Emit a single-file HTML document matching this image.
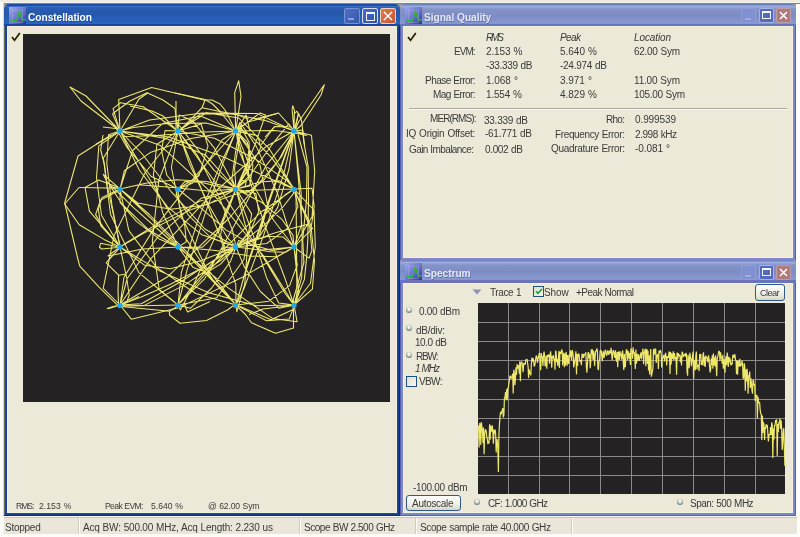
<!DOCTYPE html>
<html><head><meta charset="utf-8">
<style>
*{margin:0;padding:0;box-sizing:border-box}
html,body{width:800px;height:537px;overflow:hidden;background:#F7F6F1;font-family:"Liberation Sans",sans-serif;position:relative}
.a{position:absolute}
.t{position:absolute;white-space:nowrap;font-size:10px;color:#3A3A3A;line-height:1;will-change:transform}
.win{position:absolute}
.tb{position:absolute;left:0;right:0;top:0;height:23px;border-radius:6px 6px 0 0}
.act .tb{background:linear-gradient(#5A8AE0 0px,#2D63C8 2px,#2A5EC4 18px,#1E50B0 23px)}
.inact .tb{background:linear-gradient(#A9B6EA 0px,#8C9CDC 2px,#8898D8 18px,#7A8ACE 23px)}
.title{position:absolute;top:8px;left:24px;font-size:10.2px;font-weight:bold;line-height:1;white-space:nowrap}
.act .title{color:#fff}
.inact .title{color:#DCE2F6}
.ico{position:absolute;left:4px;top:3px;width:17px;height:17px}
.body{position:absolute;background:#ECE9D8}
.btn{position:absolute;top:4px;width:15px;height:15px;border-radius:2px}
svg{position:absolute;overflow:visible}
</style></head><body>
<div class="a" style="left:0px;top:0px;width:800px;height:537px;background:#FCFCFA;"></div>
<div class="a" style="left:0px;top:0px;width:800px;height:2px;background:#EDEAE0;"></div>
<div class="a" style="left:4px;top:2px;width:796px;height:1px;background:#F4F3EE;"></div>
<div class="a" style="left:4px;top:3px;width:796px;height:1px;background:#8A8474;"></div>
<div class="a" style="left:3px;top:3px;width:1px;height:513px;background:#D8D6D0;"></div>
<div class="a" style="left:4px;top:4px;width:792px;height:8px;background:#A09C90;"></div>
<div class="a" style="left:4px;top:10px;width:396px;height:506px;background:#1A4596;"></div>
<div class="a" style="left:4px;top:10px;width:1px;height:506px;background:#6A6C6C;"></div>
<div class="a" style="left:399px;top:10px;width:1px;height:506px;background:#0C2A6C;"></div>
<div class="a" style="left:4px;top:515px;width:396px;height:1px;background:#0C2A6C;"></div>
<div class="a" style="left:4px;top:4px;width:396px;height:22px;background:linear-gradient(#1E4C9E 0px,#1E4C9E 1.5px,#3A72C8 2.5px,#2A5EB4 3.5px,#2558AC 9px,#2862BA 18px,#2A66C0 20px,#1A48A0 20.5px,#1A48A0 22px);border-radius:5px 5px 0 0"></div>
<div class="a" style="left:7px;top:26px;width:390px;height:487px;background:#ECE9D8;border-left:1px solid #F6F1DE;border-right:1px solid #F6F1DE;border-top:1px solid #F6F1DE;border-bottom:1px solid #F6F1DE"></div>
<svg class="a" style="left:9px;top:7px" width="17" height="17" viewBox="0 0 17 17">
<defs><linearGradient id="ig97" x1="0" y1="0" x2="1" y2="1"><stop offset="0" stop-color="#A0A8E8"/><stop offset="0.5" stop-color="#7078CC"/><stop offset="1" stop-color="#2C3494"/></linearGradient></defs>
<rect width="17" height="17" fill="url(#ig97)"/>
<rect x="3.5" y="3.5" width="10" height="12" fill="none" stroke="#B8C0F0" stroke-width="0.6" opacity="0.6"/>
<polyline points="0.5,14.5 3.8,13.3 7,13.8 8.5,10.6 10.3,3.3 12.1,10.1 13.7,13.2 17,12.7" fill="none" stroke="#38B838" stroke-width="1.3"/></svg>

<div class="t" style="left:28px;top:12.5px;font-size:10.2px;font-weight:bold;color:#FFFFFF;letter-spacing:-0.05px;text-shadow:0.5px 0.5px 0.6px rgba(10,20,60,0.3)">Constellation</div>
<div class="a" style="left:344px;top:8px;width:16px;height:16px;background:linear-gradient(135deg,#5070C4,#3656AC);border:1px solid #7A92D0;border-radius:2px"></div>
<div class="a" style="left:348px;top:18px;width:6px;height:2px;background:#90A4DC"></div>
<div class="a" style="left:362px;top:8px;width:16px;height:16px;background:linear-gradient(135deg,#4A6CC8,#2E50A8);border:1px solid #D4DEF4;border-radius:2px"></div>
<div class="a" style="left:366px;top:12px;width:9px;height:9px;border:1px solid #F4F6FC;border-top-width:2px"></div>
<div class="a" style="left:380px;top:8px;width:16px;height:16px;background:linear-gradient(135deg,#DE7E4E,#C4582C);border:1px solid #F0D0BC;border-radius:2px"></div>
<svg class="a" style="left:380px;top:8px" width="16" height="16" viewBox="0 0 16 16"><path d="M4,4L12,12M12,4L4,12" stroke="#FFFFFF" stroke-width="1.5"/></svg>

<div class="a" style="left:23px;top:34px;width:367px;height:368px;background:#242222;"></div>
<svg class="a" style="left:11px;top:32px" width="10" height="10" viewBox="0 0 10 10"><path d="M1.2,5.5 L3.8,8.8 L9,1.2" fill="none" stroke="#EAD84A" stroke-width="2.2" opacity="0.6"/><path d="M1,5 L3.5,8.3 L8.8,1" fill="none" stroke="#141410" stroke-width="1.5"/></svg>
<div class="a" style="left:400px;top:10px;width:396px;height:251px;background:#7C88C8;"></div>
<div class="a" style="left:400px;top:10px;width:1px;height:251px;background:#5A60A8;"></div>
<div class="a" style="left:795px;top:10px;width:1px;height:251px;background:#5A60A8;"></div>
<div class="a" style="left:400px;top:260px;width:396px;height:1px;background:#5A60A8;"></div>
<div class="a" style="left:400px;top:4px;width:396px;height:22px;background:linear-gradient(#7080C0 0px,#7080C0 1px,#A0B0DC 2px,#98A8D8 3px,#8494C8 5px,#7C8CC4 12px,#8898D0 19px,#8494CC 20px,#6A74B8 20.5px,#6A74B8 22px);border-radius:5px 5px 0 0"></div>
<div class="a" style="left:403px;top:26px;width:390px;height:232px;background:#ECE9D8;border-left:1px solid #F6F1DE;border-right:1px solid #F6F1DE;border-top:1px solid #F6F1DE;border-bottom:1px solid #F6F1DE"></div>
<svg class="a" style="left:405px;top:7px" width="17" height="17" viewBox="0 0 17 17">
<defs><linearGradient id="ig4057" x1="0" y1="0" x2="1" y2="1"><stop offset="0" stop-color="#A0A8E8"/><stop offset="0.5" stop-color="#7078CC"/><stop offset="1" stop-color="#2C3494"/></linearGradient></defs>
<rect width="17" height="17" fill="url(#ig4057)"/>
<rect x="3.5" y="3.5" width="10" height="12" fill="none" stroke="#B8C0F0" stroke-width="0.6" opacity="0.6"/>
<polyline points="0.5,14.5 3.8,13.3 7,13.8 8.5,10.6 10.3,3.3 12.1,10.1 13.7,13.2 17,12.7" fill="none" stroke="#38B838" stroke-width="1.3"/></svg>

<div class="t" style="left:424px;top:12.5px;font-size:10.2px;font-weight:bold;color:#E4E8F8;letter-spacing:-0.05px;text-shadow:0.5px 0.5px 0.6px rgba(10,20,60,0.3)">Signal Quality</div>
<div class="a" style="left:741px;top:8px;width:15px;height:15px;background:#8090D0;border:1px solid #8E9CD8;border-radius:2px"></div>
<div class="a" style="left:745px;top:18px;width:6px;height:2px;background:#A0ACDE"></div>
<div class="a" style="left:759px;top:8px;width:15px;height:15px;background:#5668C0;border:1px solid #A4B2E6;border-radius:2px"></div>
<div class="a" style="left:762px;top:11px;width:9px;height:8px;border:1px solid #F4F6FC;border-top-width:2px"></div>
<div class="a" style="left:776px;top:8px;width:15px;height:15px;background:#B07A7C;border:1px solid #BE9CA8;border-radius:2px"></div>
<svg class="a" style="left:776px;top:8px" width="15" height="15" viewBox="0 0 15 15"><path d="M4,4L11,11M11,4L4,11" stroke="#FFFFFF" stroke-width="1.5"/></svg>

<svg class="a" style="left:407px;top:32px" width="10" height="10" viewBox="0 0 10 10"><path d="M1.2,5.5 L3.8,8.8 L9,1.2" fill="none" stroke="#EAD84A" stroke-width="2.2" opacity="0.6"/><path d="M1,5 L3.5,8.3 L8.8,1" fill="none" stroke="#141410" stroke-width="1.5"/></svg>
<div class="a" style="left:409px;top:108px;width:378px;height:1px;background:#ACA899;"></div>
<div class="a" style="left:409px;top:109px;width:378px;height:1px;background:#FAFAF6;"></div>
<div class="a" style="left:400px;top:260px;width:396px;height:7px;background:#8A90B8;"></div>
<div class="a" style="left:400px;top:266px;width:396px;height:250px;background:#7C88C8;"></div>
<div class="a" style="left:400px;top:266px;width:1px;height:250px;background:#5A60A8;"></div>
<div class="a" style="left:795px;top:266px;width:1px;height:250px;background:#5A60A8;"></div>
<div class="a" style="left:400px;top:515px;width:396px;height:1px;background:#5A60A8;"></div>
<div class="a" style="left:400px;top:260px;width:396px;height:23px;background:linear-gradient(#7080C0 0px,#7080C0 1px,#A0B0DC 2px,#98A8D8 3px,#8494C8 5px,#7C8CC4 12px,#8898D0 19px,#8494CC 20px,#6A74B8 20.5px,#6A74B8 22px);border-radius:5px 5px 0 0"></div>
<div class="a" style="left:403px;top:283px;width:390px;height:230px;background:#ECE9D8;border-left:1px solid #F6F1DE;border-right:1px solid #F6F1DE;border-top:1px solid #F6F1DE;border-bottom:1px solid #F6F1DE"></div>
<svg class="a" style="left:405px;top:263px" width="17" height="17" viewBox="0 0 17 17">
<defs><linearGradient id="ig405263" x1="0" y1="0" x2="1" y2="1"><stop offset="0" stop-color="#A0A8E8"/><stop offset="0.5" stop-color="#7078CC"/><stop offset="1" stop-color="#2C3494"/></linearGradient></defs>
<rect width="17" height="17" fill="url(#ig405263)"/>
<rect x="3.5" y="3.5" width="10" height="12" fill="none" stroke="#B8C0F0" stroke-width="0.6" opacity="0.6"/>
<polyline points="0.5,14.5 3.8,13.3 7,13.8 8.5,10.6 10.3,3.3 12.1,10.1 13.7,13.2 17,12.7" fill="none" stroke="#38B838" stroke-width="1.3"/></svg>

<div class="t" style="left:424px;top:268.5px;font-size:10.2px;font-weight:bold;color:#E4E8F8;letter-spacing:-0.05px;text-shadow:0.5px 0.5px 0.6px rgba(10,20,60,0.3)">Spectrum</div>
<div class="a" style="left:741px;top:265px;width:15px;height:15px;background:#8090D0;border:1px solid #8E9CD8;border-radius:2px"></div>
<div class="a" style="left:745px;top:275px;width:6px;height:2px;background:#A0ACDE"></div>
<div class="a" style="left:759px;top:265px;width:15px;height:15px;background:#5668C0;border:1px solid #A4B2E6;border-radius:2px"></div>
<div class="a" style="left:762px;top:268px;width:9px;height:8px;border:1px solid #F4F6FC;border-top-width:2px"></div>
<div class="a" style="left:776px;top:265px;width:15px;height:15px;background:#B07A7C;border:1px solid #BE9CA8;border-radius:2px"></div>
<svg class="a" style="left:776px;top:265px" width="15" height="15" viewBox="0 0 15 15"><path d="M4,4L11,11M11,4L4,11" stroke="#FFFFFF" stroke-width="1.5"/></svg>

<div class="a" style="left:478px;top:303px;width:307px;height:191px;background:#242222;"></div>
<svg class="a" style="left:0;top:0" width="800" height="537">
<g stroke="#8A8A88" stroke-width="1" shape-rendering="crispEdges">
<path d="M508.5,303V494M539.5,303V494M569.5,303V494M600.5,303V494M631.5,303V494M662.5,303V494M693.5,303V494M724.5,303V494M755.5,303V494"/>
<path d="M478,322.5H785M478,341.5H785M478,360.5H785M478,379.5H785M478,399.5H785M478,418.5H785M478,437.5H785M478,456.5H785M478,475.5H785"/>
</g></svg>
<svg class="a" style="left:472px;top:289px" width="10" height="6" viewBox="0 0 10 6"><path d="M0.5,0.5H9.5L5,5.5Z" fill="#8C94B8"/></svg>
<div class="a" style="left:533px;top:286px;width:11px;height:11px;border:1px solid #1C5180;background:linear-gradient(135deg,#DCDCD4,#F8F8F4)"></div>
<svg class="a" style="left:535px;top:288px" width="8" height="7" viewBox="0 0 8 7"><path d="M1,3.2 L3,5.4 L7,1" fill="none" stroke="#21A121" stroke-width="1.6"/></svg>
<div class="a" style="left:755px;top:284px;width:30px;height:17px;border:1px solid #2F5A8A;border-radius:3px;background:linear-gradient(#FFFFFF,#F2F1EA 50%,#E4E1D6 85%,#D6D2C4)"></div>

<div class="a" style="left:406px;top:307px;width:6px;height:6px;border-radius:50%;background:radial-gradient(circle at 50% 35%,#FFFFFF 0,#E8F0E0 25%,#A8B8A0 50%,#5A6898 80%,#2A3478 100%)"></div>

<div class="a" style="left:406px;top:325px;width:6px;height:6px;border-radius:50%;background:radial-gradient(circle at 50% 35%,#FFFFFF 0,#E8F0E0 25%,#A8B8A0 50%,#5A6898 80%,#2A3478 100%)"></div>

<div class="a" style="left:406px;top:352px;width:6px;height:6px;border-radius:50%;background:radial-gradient(circle at 50% 35%,#FFFFFF 0,#E8F0E0 25%,#A8B8A0 50%,#5A6898 80%,#2A3478 100%)"></div>

<div class="a" style="left:474px;top:499px;width:6px;height:6px;border-radius:50%;background:radial-gradient(circle at 50% 35%,#FFFFFF 0,#E8F0E0 25%,#A8B8A0 50%,#5A6898 80%,#2A3478 100%)"></div>

<div class="a" style="left:677px;top:499px;width:6px;height:6px;border-radius:50%;background:radial-gradient(circle at 50% 35%,#FFFFFF 0,#E8F0E0 25%,#A8B8A0 50%,#5A6898 80%,#2A3478 100%)"></div>

<div class="a" style="left:406px;top:376px;width:11px;height:11px;border:1px solid #1C5180;background:linear-gradient(135deg,#DCDCD4,#F8F8F4)"></div>
<div class="a" style="left:406px;top:495px;width:55px;height:16px;border:1px solid #2F5A8A;border-radius:3px;background:linear-gradient(#FFFFFF,#F2F1EA 50%,#E4E1D6 85%,#D6D2C4)"></div>

<div class="a" style="left:4px;top:517px;width:793px;height:1px;background:#C8C4B6;"></div>
<div class="a" style="left:4px;top:518px;width:793px;height:16px;background:#EAE7DA;"></div>
<div class="a" style="left:78px;top:518px;width:1px;height:16px;background:#CFCBBE;"></div><div class="a" style="left:79px;top:518px;width:1px;height:16px;background:#FFFFFF;"></div>
<div class="a" style="left:299px;top:518px;width:1px;height:16px;background:#CFCBBE;"></div><div class="a" style="left:300px;top:518px;width:1px;height:16px;background:#FFFFFF;"></div>
<div class="a" style="left:415px;top:518px;width:1px;height:16px;background:#CFCBBE;"></div><div class="a" style="left:416px;top:518px;width:1px;height:16px;background:#FFFFFF;"></div>
<div class="a" style="left:571px;top:518px;width:1px;height:16px;background:#CFCBBE;"></div><div class="a" style="left:572px;top:518px;width:1px;height:16px;background:#FFFFFF;"></div>
<svg class="a" style="left:0;top:0" width="800" height="537"><polyline points="294.0,131.0 257.3,113.6 202.0,113.1 149.5,120.1 120.0,131.0 123.0,136.5 153.9,135.7 197.4,132.2 236.0,131.0 257.9,135.8 260.8,147.8 250.6,166.1 236.0,189.0 224.6,213.4 220.6,234.9 225.0,247.6 236.0,247.0 249.5,233.0 258.7,211.6 255.9,193.6 236.0,189.0 200.4,200.9 159.0,222.9 127.3,242.3 120.0,247.0 143.1,233.6 190.6,209.8 246.9,190.4 294.0,189.0 314.0,210.1 315.3,246.5 310.5,283.3 294.0,305.0 278.7,303.0 266.4,277.4 253.4,235.8 236.0,189.0 214.2,147.8 192.9,121.1 179.1,115.0 178.0,131.0 189.8,164.8 208.9,205.2 226.9,237.1 236.0,247.0 232.5,230.3 217.9,194.3 197.4,155.4 178.0,131.0 165.1,130.5 161.5,150.1 166.7,175.0 178.0,189.0 192.4,183.3 207.5,162.2 222.3,139.8 236.0,131.0 247.2,141.9 252.9,165.5 249.7,186.1 236.0,189.0 214.1,170.4 191.2,141.4 176.9,122.2 178.0,131.0 194.6,172.0 218.2,231.7 235.8,284.3 236.0,305.0 215.4,283.6 180.5,230.4 144.4,170.6 120.0,131.0 114.5,125.5 127.2,147.7 151.3,176.5 178.0,189.0 199.0,175.7 208.0,146.2 201.1,124.0 178.0,131.0 144.8,173.3 114.1,235.5 103.2,288.3 120.0,305.0 167.7,276.7 229.3,218.0 279.1,159.5 294.0,131.0 266.5,146.2 209.5,196.7 151.1,258.4 120.0,305.0 131.3,319.2 179.4,307.4 242.4,277.2 294.0,247.0 312.6,228.3 306.9,224.6 275.2,232.8 236.0,247.0 200.0,261.0 170.4,268.8 144.7,265.3 120.0,247.0 101.5,215.3 96.5,177.7 98.8,145.9 120.0,131.0 168.8,136.9 225.0,157.5 271.5,179.3 294.0,189.0 286.9,180.6 255.9,159.4 214.5,138.3 178.0,131.0 156.9,144.2 153.4,175.1 162.9,213.3 178.0,247.0 193.2,267.6 206.9,272.5 220.5,264.1 236.0,247.0 253.6,226.6 271.4,207.6 285.9,194.1 294.0,189.0 293.4,193.6 283.1,206.8 263.5,225.8 236.0,247.0 203.6,267.1 170.4,284.2 141.2,296.9 120.0,305.0 108.9,308.5 107.2,308.4 112.2,306.8 120.0,305.0 126.6,302.4 129.2,295.2 126.7,277.8 120.0,247.0 112.0,205.5 106.8,163.4 108.5,134.8 120.0,131.0 141.8,153.5 171.6,192.2 204.9,229.0 236.0,247.0 258.7,237.9 267.7,206.0 260.0,164.9 236.0,131.0 200.5,115.9 162.5,123.6 132.6,150.5 120.0,189.0 128.8,230.6 156.6,267.4 195.7,293.5 236.0,305.0 268.9,301.2 289.6,285.6 297.2,265.0 294.0,247.0 283.2,237.1 267.9,236.2 251.2,241.2 236.0,247.0 225.1,249.9 220.9,249.3 224.7,247.5 236.0,247.0 252.5,249.0 270.4,251.8 285.6,252.2 294.0,247.0 293.0,235.4 281.9,219.3 262.0,202.5 236.0,189.0 206.7,181.4 176.4,179.8 146.8,182.9 120.0,189.0 102.1,197.4 98.3,209.1 100.7,225.6 120.0,247.0 160.0,271.1 208.7,292.7 256.3,305.7 294.0,305.0 312.4,289.2 314.5,260.8 310.9,225.2 294.0,189.0 271.9,158.1 252.0,136.9 239.2,127.8 236.0,131.0 241.0,144.1 248.1,162.2 248.8,178.9 236.0,189.0 208.4,190.9 172.4,187.4 139.2,184.8 120.0,189.0 120.1,202.3 136.4,221.4 159.2,238.9 178.0,247.0 186.3,241.9 184.8,225.8 179.4,205.4 178.0,189.0 185.2,181.4 200.7,182.3 219.8,186.8 236.0,189.0 245.1,186.3 246.3,181.2 242.2,180.2 236.0,189.0 228.9,208.2 218.9,231.3 202.5,247.2 178.0,247.0 148.4,229.7 122.4,204.5 110.6,186.6 120.0,189.0 149.4,214.5 188.5,253.7 221.9,289.3 236.0,305.0 225.3,294.1 194.2,261.8 154.4,221.7 120.0,189.0 103.3,174.4 106.9,181.6 134.1,208.1 178.0,247.0 228.5,288.1 272.5,318.4 297.1,321.7 294.0,305.0 263.0,255.4 213.4,194.3 160.5,145.6 120.0,131.0 103.4,158.0 110.5,214.3 138.8,272.6 178.0,305.0 216.7,297.8 244.0,259.2 251.7,213.9 236.0,189.0 201.1,198.3 159.1,235.3 127.2,278.5 120.0,305.0 141.3,303.8 181.2,281.5 219.3,256.6 236.0,247.0 222.3,259.2 185.3,284.6 144.3,305.4 120.0,305.0 124.0,277.2 154.0,228.6 196.8,174.4 236.0,131.0 260.1,112.9 265.5,115.0 255.4,143.7 236.0,189.0 213.5,240.5 193.4,285.3 180.4,310.0 178.0,305.0 187.1,269.9 204.4,215.8 223.1,162.9 236.0,131.0 239.4,129.5 235.6,151.7 232.0,178.4 236.0,189.0 250.5,174.9 271.2,145.7 288.7,123.8 294.0,131.0 283.9,173.3 263.5,235.6 244.0,288.5 236.0,305.0 244.2,276.1 264.0,216.9 284.4,158.4 294.0,131.0 287.4,148.3 268.6,200.8 247.9,262.5 236.0,305.0 236.8,311.7 244.8,283.7 248.2,236.3 236.0,189.0 205.8,155.3 166.2,138.5 132.8,133.1 120.0,131.0 133.5,127.5 166.9,123.4 206.0,123.1 236.0,131.0 249.1,147.0 247.1,166.3 239.4,182.0 236.0,189.0 242.9,187.2 259.3,182.0 279.0,180.8 294.0,189.0 298.0,206.5 288.6,227.6 266.7,243.5 236.0,247.0 201.4,234.4 167.7,207.1 139.3,170.0 120.0,131.0 113.0,108.7 120.6,102.7 143.1,106.7 178.0,131.0 219.3,187.8 258.0,248.7 284.9,293.2 294.0,305.0 285.5,279.8 266.0,228.1 246.3,171.0 236.0,131.0 240.0,122.3 256.3,146.4 277.4,193.1 294.0,247.0 298.9,293.1 289.2,319.1 266.5,320.7 236.0,305.0 205.1,265.8 181.5,216.1 171.4,167.5 178.0,131.0 200.2,114.1 232.6,113.8 266.9,121.1 294.0,131.0 306.4,135.5 300.0,133.9 275.1,130.6 236.0,131.0 190.9,138.4 150.2,152.6 124.3,170.8 120.0,189.0 137.7,203.0 170.7,209.2 207.4,204.7 236.0,189.0 249.7,165.7 249.1,142.3 241.5,128.3 236.0,131.0 239.4,151.6 253.1,184.7 273.4,220.0 294.0,247.0 309.0,258.2 311.9,250.8 309.6,226.0 294.0,189.0 269.4,148.9 238.7,118.0 206.4,112.7 178.0,131.0 158.8,180.3 152.3,241.4 159.3,290.2 178.0,305.0 204.8,278.6 235.6,223.0 266.6,164.8 294.0,131.0 311.5,135.3 314.7,171.1 312.1,216.4 294.0,247.0 261.9,250.1 226.2,230.1 195.9,203.7 178.0,189.0 176.0,194.4 188.4,215.2 210.5,237.5 236.0,247.0 259.5,236.5 277.6,207.6 289.0,169.0 294.0,131.0 294.4,110.2 292.8,105.7 292.1,109.3 294.0,131.0 298.3,177.6 302.2,230.9 301.7,277.4 294.0,305.0 279.0,308.3 260.4,291.5 244.2,266.6 236.0,247.0 238.7,240.4 251.9,244.8 272.0,250.5 294.0,247.0 310.8,230.2 314.2,206.2 312.0,188.2 294.0,189.0 260.5,212.5 222.8,250.7 192.1,286.8 178.0,305.0 183.6,299.1 203.3,276.5 224.9,253.8 236.0,247.0 230.5,261.4 211.7,288.0 190.3,308.3 178.0,305.0 181.4,272.3 198.2,219.4 219.7,165.9 236.0,131.0 241.8,124.3 239.0,141.6 234.6,168.5 236.0,189.0 246.6,193.1 263.9,180.0 281.7,156.2 294.0,131.0 298.4,114.0 296.9,111.2 294.2,113.7 294.0,131.0 297.2,160.0 301.2,193.6 301.4,224.8 294.0,247.0 276.8,256.8 250.0,256.0 215.7,250.5 178.0,247.0 142.6,249.0 116.8,254.3 108.0,256.0 120.0,247.0" fill="none" stroke="#EFE872" stroke-width="1.05" stroke-linejoin="round"/><polyline points="120,131 81,101 70,87 86,96 120,131" fill="none" stroke="#EFE872" stroke-width="1.1" stroke-linejoin="round"/><polyline points="120,131 118.7,99.5 151.7,87.5 170.5,92 205,99.5 212.5,104 220,111.5 235.7,131" fill="none" stroke="#EFE872" stroke-width="1.1" stroke-linejoin="round"/><polyline points="112.5,113.7 130,101 147,92.7 163,100 175,108.5 178,132" fill="none" stroke="#EFE872" stroke-width="1.1" stroke-linejoin="round"/><polyline points="112.5,113.7 120,131" fill="none" stroke="#EFE872" stroke-width="1.1" stroke-linejoin="round"/><polyline points="120,131 139,99 148,92.7" fill="none" stroke="#EFE872" stroke-width="1.1" stroke-linejoin="round"/><polyline points="130,106 152,111 163,116 178,132" fill="none" stroke="#EFE872" stroke-width="1.1" stroke-linejoin="round"/><polyline points="103,127 120,129" fill="none" stroke="#EFE872" stroke-width="1.1" stroke-linejoin="round"/><polyline points="120,131 95.5,144.5" fill="none" stroke="#EFE872" stroke-width="1.1" stroke-linejoin="round"/><polyline points="235.7,131 234.7,92.7 238.7,80.75 241,96.5 235.7,131" fill="none" stroke="#EFE872" stroke-width="1.1" stroke-linejoin="round"/><polyline points="175,93 205,100.2 202,107.7 181,129.5" fill="none" stroke="#EFE872" stroke-width="1.1" stroke-linejoin="round"/><polyline points="202,107.7 220,111.5 238,115 248.5,119" fill="none" stroke="#EFE872" stroke-width="1.1" stroke-linejoin="round"/><polyline points="205,100 212,100 220,104 225,110 235.7,131" fill="none" stroke="#EFE872" stroke-width="1.1" stroke-linejoin="round"/><polyline points="176,101 176,132" fill="none" stroke="#EFE872" stroke-width="1.1" stroke-linejoin="round"/><polyline points="235.7,131 246,115 250,131" fill="none" stroke="#EFE872" stroke-width="1.1" stroke-linejoin="round"/><polyline points="248.5,122 278.5,113 290.5,126.5 294,131" fill="none" stroke="#EFE872" stroke-width="1.1" stroke-linejoin="round"/><polyline points="265,137 274.7,126.5 290.5,127" fill="none" stroke="#EFE872" stroke-width="1.1" stroke-linejoin="round"/><polyline points="294.7,131 298.5,122 324.3,84.8 321,95 301.5,125 294.7,131" fill="none" stroke="#EFE872" stroke-width="1.1" stroke-linejoin="round"/><polyline points="294.7,131 298.5,113.3 301.5,120.5 304.5,145" fill="none" stroke="#EFE872" stroke-width="1.1" stroke-linejoin="round"/><polyline points="255,119 278,113.3" fill="none" stroke="#EFE872" stroke-width="1.1" stroke-linejoin="round"/><polyline points="274.5,126.5 261,145" fill="none" stroke="#EFE872" stroke-width="1.1" stroke-linejoin="round"/><polyline points="111,135 78,156 64.7,203 78.1,260 79.8,266.2 99.5,287.6 118.6,306.2" fill="none" stroke="#EFE872" stroke-width="1.1" stroke-linejoin="round"/><polyline points="79,187.5 120.2,188.2" fill="none" stroke="#EFE872" stroke-width="1.1" stroke-linejoin="round"/><polyline points="79,187.5 64.7,204 79.2,224.7 104,239.4 120.3,247.2" fill="none" stroke="#EFE872" stroke-width="1.1" stroke-linejoin="round"/><polyline points="120,188 98.5,180 85,187.5 89.4,211.2 97.2,220.2 120.3,247.2" fill="none" stroke="#EFE872" stroke-width="1.1" stroke-linejoin="round"/><polyline points="120.2,190 100.6,200 95.6,214.6 102.9,227 120.3,247.2" fill="none" stroke="#EFE872" stroke-width="1.1" stroke-linejoin="round"/><polyline points="103,135 100.7,150 104.5,165 106.7,183 120.3,247.2" fill="none" stroke="#EFE872" stroke-width="1.1" stroke-linejoin="round"/><polyline points="120.3,247.2 100.6,243.3 99.5,247.2 101.7,249 120.3,247.2" fill="none" stroke="#EFE872" stroke-width="1.1" stroke-linejoin="round"/><polyline points="120.3,247.2 108.5,260" fill="none" stroke="#EFE872" stroke-width="1.1" stroke-linejoin="round"/><polyline points="113,255 106.2,262.9 118.6,275.2 118,289.9 118.6,306.2" fill="none" stroke="#EFE872" stroke-width="1.1" stroke-linejoin="round"/><polyline points="118.6,275.2 126.5,274" fill="none" stroke="#EFE872" stroke-width="1.1" stroke-linejoin="round"/><polyline points="118.6,306.2 138.9,296.6" fill="none" stroke="#EFE872" stroke-width="1.1" stroke-linejoin="round"/><polyline points="118.5,306.3 169.5,311.2 178.5,305.7" fill="none" stroke="#EFE872" stroke-width="1.1" stroke-linejoin="round"/><polyline points="169.5,311.2 169.5,315 180,323.2 206.5,320.5 227.5,310 235,304.3" fill="none" stroke="#EFE872" stroke-width="1.1" stroke-linejoin="round"/><polyline points="118.5,306.3 177,305" fill="none" stroke="#EFE872" stroke-width="1.1" stroke-linejoin="round"/><polyline points="184.5,304.5 187.5,312 210,301.5" fill="none" stroke="#EFE872" stroke-width="1.1" stroke-linejoin="round"/><polyline points="235,304.3 245.5,314.5 251.5,322.7 275.5,333.2 293.5,328 293.5,305.2" fill="none" stroke="#EFE872" stroke-width="1.1" stroke-linejoin="round"/><polyline points="235,304.3 271,319.7 292,310" fill="none" stroke="#EFE872" stroke-width="1.1" stroke-linejoin="round"/><polyline points="249,314.5 263,309 293.5,305.2" fill="none" stroke="#EFE872" stroke-width="1.1" stroke-linejoin="round"/><polyline points="294.7,131 302.6,130 303.7,141.2 308.2,167 308.5,200 307.8,240 306.7,256.9 304.4,279.4 294,305" fill="none" stroke="#EFE872" stroke-width="1.1" stroke-linejoin="round"/><polyline points="298,134.5 307,167 306.5,200 302.7,240 303.9,262.5 293.2,300 294,305" fill="none" stroke="#EFE872" stroke-width="1.1" stroke-linejoin="round"/><polyline points="296,189 297,300" fill="none" stroke="#EFE872" stroke-width="1.1" stroke-linejoin="round"/><circle cx="120" cy="131" r="2.7" fill="#20A8F0"/><circle cx="120" cy="189.5" r="2.7" fill="#20A8F0"/><circle cx="120" cy="247" r="2.7" fill="#20A8F0"/><circle cx="120" cy="305.5" r="2.7" fill="#20A8F0"/><circle cx="178" cy="131" r="2.7" fill="#20A8F0"/><circle cx="178" cy="189.5" r="2.7" fill="#20A8F0"/><circle cx="178" cy="247" r="2.7" fill="#20A8F0"/><circle cx="178" cy="305.5" r="2.7" fill="#20A8F0"/><circle cx="235.5" cy="131" r="2.7" fill="#20A8F0"/><circle cx="235.5" cy="189.5" r="2.7" fill="#20A8F0"/><circle cx="235.5" cy="247" r="2.7" fill="#20A8F0"/><circle cx="235.5" cy="305.5" r="2.7" fill="#20A8F0"/><circle cx="294" cy="131" r="2.7" fill="#20A8F0"/><circle cx="294" cy="189.5" r="2.7" fill="#20A8F0"/><circle cx="294" cy="247" r="2.7" fill="#20A8F0"/><circle cx="294" cy="305.5" r="2.7" fill="#20A8F0"/></svg>
<svg class="a" style="left:0;top:0" width="800" height="537"><polyline points="478.0,430.8 478.6,425.6 479.1,447.4 479.7,423.0 480.2,425.0 480.8,445.1 481.3,422.2 481.9,426.5 482.4,431.5 483.0,443.0 483.5,427.5 484.1,454.2 484.6,435.5 485.2,429.9 485.7,429.8 486.3,431.7 486.8,436.6 487.4,439.5 487.9,444.2 488.5,440.8 489.0,443.5 489.6,424.2 490.1,439.7 490.7,425.6 491.2,430.4 491.8,431.5 492.3,425.3 492.9,433.4 493.4,443.6 494.0,429.5 494.5,433.6 495.1,429.7 495.6,433.0 496.2,452.5 496.7,439.0 497.3,440.8 497.8,448.1 498.4,472.0 498.9,435.2 499.5,423.8 500.0,416.7 500.6,411.7 501.1,414.3 501.7,411.8 502.2,410.5 502.8,408.1 503.3,417.5 503.9,414.6 504.4,398.0 505.0,397.6 505.5,392.0 506.1,400.3 506.6,389.4 507.2,400.1 507.7,388.2 508.3,388.0 508.8,383.9 509.4,380.5 509.9,376.2 510.5,376.1 511.0,378.1 511.6,378.0 512.1,376.6 512.7,373.5 513.2,393.5 513.8,369.7 514.3,372.1 514.9,385.1 515.4,378.9 516.0,367.2 516.5,375.0 517.1,364.1 517.6,368.5 518.2,367.6 518.7,365.0 519.3,373.6 519.8,361.3 520.4,381.3 520.9,363.4 521.5,362.0 522.0,362.2 522.6,366.4 523.1,372.2 523.7,363.8 524.2,363.3 524.8,364.1 525.3,364.5 525.9,359.3 526.4,360.0 527.0,359.5 527.5,362.2 528.1,366.9 528.6,377.9 529.2,369.4 529.7,373.8 530.3,372.3 530.8,375.4 531.4,363.4 531.9,357.5 532.5,361.7 533.0,358.1 533.6,360.3 534.1,366.0 534.7,365.8 535.2,362.7 535.8,358.1 536.3,355.6 536.9,357.0 537.4,362.8 538.0,358.7 538.5,357.6 539.1,353.9 539.6,352.8 540.2,361.6 540.7,370.3 541.3,353.0 541.8,357.0 542.4,356.5 542.9,366.0 543.5,356.0 544.0,351.6 544.6,355.3 545.1,366.1 545.7,365.5 546.2,355.9 546.8,368.7 547.3,355.1 547.9,356.2 548.4,356.4 549.0,354.2 549.5,363.6 550.1,355.1 550.6,351.4 551.2,358.0 551.7,367.6 552.3,356.1 552.8,357.7 553.4,355.2 553.9,360.0 554.5,358.5 555.0,369.7 555.6,350.6 556.1,352.4 556.7,362.2 557.2,358.7 557.8,366.0 558.3,360.2 558.9,350.9 559.4,368.1 560.0,351.7 560.5,352.8 561.1,353.8 561.6,349.6 562.2,350.6 562.7,365.4 563.3,356.2 563.8,352.7 564.4,367.2 564.9,353.7 565.5,365.6 566.0,351.9 566.6,356.1 567.1,365.6 567.7,355.0 568.2,362.7 568.8,363.7 569.3,354.6 569.9,356.9 570.4,350.3 571.0,353.8 571.5,360.2 572.1,350.0 572.6,351.5 573.2,355.1 573.7,367.4 574.3,363.9 574.8,360.5 575.4,357.1 575.9,351.3 576.5,374.6 577.0,354.0 577.6,366.0 578.1,354.3 578.7,353.7 579.2,355.9 579.8,361.6 580.3,360.6 580.9,360.8 581.4,365.2 582.0,353.9 582.5,357.6 583.1,353.9 583.6,357.9 584.2,354.5 584.7,354.4 585.3,354.6 585.8,352.2 586.4,367.5 586.9,372.8 587.5,363.4 588.0,353.0 588.6,352.7 589.1,358.5 589.7,353.7 590.2,368.2 590.8,360.3 591.3,349.2 591.9,354.1 592.4,349.4 593.0,360.0 593.5,350.8 594.1,353.7 594.6,366.1 595.2,355.8 595.7,351.0 596.3,351.0 596.8,348.5 597.4,350.6 597.9,368.6 598.5,369.9 599.0,361.5 599.6,360.0 600.1,351.1 600.7,350.3 601.2,350.8 601.8,356.3 602.3,361.1 602.9,353.4 603.4,351.2 604.0,357.9 604.5,354.9 605.1,350.6 605.6,349.9 606.2,354.1 606.7,355.7 607.3,353.4 607.8,350.3 608.4,353.2 608.9,354.9 609.5,351.2 610.0,351.2 610.6,353.4 611.1,347.8 611.7,354.9 612.2,360.2 612.8,352.4 613.3,350.2 613.9,351.7 614.4,355.8 615.0,357.9 615.5,350.2 616.1,359.9 616.6,361.6 617.2,352.1 617.7,367.3 618.3,352.1 618.8,351.7 619.4,360.0 619.9,351.2 620.5,355.6 621.0,353.6 621.6,359.8 622.1,352.8 622.7,350.5 623.2,361.4 623.8,369.9 624.3,353.9 624.9,366.9 625.4,366.7 626.0,352.8 626.5,349.3 627.1,350.9 627.6,359.9 628.2,351.1 628.7,353.6 629.3,359.0 629.8,353.0 630.4,364.9 630.9,348.5 631.5,351.3 632.0,350.3 632.6,358.6 633.1,347.4 633.7,353.2 634.2,351.9 634.8,356.9 635.3,368.9 635.9,349.4 636.4,363.6 637.0,353.5 637.5,361.1 638.1,357.2 638.6,354.2 639.2,360.9 639.7,357.9 640.3,356.1 640.8,352.6 641.4,359.2 641.9,352.8 642.5,352.0 643.0,348.5 643.6,364.3 644.1,353.0 644.7,351.4 645.2,348.8 645.8,366.2 646.3,350.5 646.9,349.1 647.4,364.0 648.0,350.7 648.5,370.6 649.1,355.2 649.6,374.4 650.2,361.9 650.7,348.9 651.3,376.7 651.8,374.4 652.4,371.1 652.9,368.6 653.5,348.9 654.0,354.8 654.6,353.4 655.1,349.0 655.7,349.3 656.2,363.0 656.8,355.7 657.3,355.2 657.9,354.1 658.4,369.0 659.0,350.7 659.5,353.2 660.1,351.1 660.6,350.1 661.2,354.1 661.7,367.6 662.3,357.4 662.8,358.2 663.4,355.8 663.9,355.0 664.5,361.5 665.0,355.7 665.6,352.9 666.1,356.8 666.7,365.4 667.2,356.5 667.8,357.2 668.3,357.9 668.9,353.0 669.4,351.5 670.0,373.9 670.5,352.1 671.1,364.4 671.6,353.4 672.2,359.1 672.7,357.4 673.3,351.4 673.8,360.1 674.4,353.0 674.9,356.4 675.5,359.6 676.0,357.1 676.6,374.8 677.1,352.6 677.7,359.5 678.2,353.1 678.8,356.4 679.3,355.0 679.9,354.9 680.4,362.1 681.0,356.0 681.5,365.5 682.1,351.8 682.6,352.3 683.2,357.1 683.7,354.5 684.3,355.3 684.8,353.9 685.4,356.7 685.9,352.9 686.5,354.9 687.0,370.7 687.6,375.8 688.1,354.9 688.7,361.7 689.2,368.2 689.8,352.7 690.3,356.2 690.9,359.3 691.4,366.2 692.0,360.7 692.5,355.8 693.1,351.5 693.6,378.9 694.2,359.9 694.7,362.8 695.3,370.3 695.8,356.0 696.4,351.6 696.9,369.3 697.5,366.0 698.0,365.2 698.6,365.2 699.1,371.1 699.7,353.9 700.2,358.1 700.8,354.0 701.3,365.0 701.9,361.7 702.4,365.1 703.0,354.6 703.5,352.4 704.1,365.9 704.6,356.7 705.2,366.9 705.7,355.7 706.3,356.7 706.8,357.5 707.4,359.5 707.9,362.3 708.5,355.4 709.0,358.2 709.6,366.9 710.1,372.4 710.7,369.1 711.2,358.6 711.8,365.3 712.3,355.3 712.9,368.6 713.4,353.4 714.0,365.1 714.5,357.3 715.1,366.5 715.6,355.3 716.2,366.3 716.7,376.3 717.3,357.5 717.8,357.0 718.4,352.7 718.9,351.2 719.5,351.7 720.0,361.0 720.6,352.3 721.1,357.3 721.7,357.5 722.2,363.7 722.8,354.8 723.3,368.7 723.9,359.2 724.4,362.3 725.0,372.7 725.5,360.3 726.1,356.2 726.6,365.1 727.2,352.5 727.7,357.8 728.3,367.0 728.8,356.7 729.4,362.3 729.9,357.8 730.5,363.5 731.0,365.4 731.6,362.7 732.1,364.5 732.7,356.0 733.2,354.7 733.8,356.8 734.3,358.0 734.9,354.2 735.4,359.6 736.0,360.6 736.5,374.1 737.1,360.4 737.6,374.7 738.2,360.6 738.7,365.7 739.3,366.3 739.8,358.9 740.4,366.5 740.9,364.5 741.5,364.7 742.0,360.6 742.6,364.7 743.1,378.6 743.7,378.1 744.2,363.2 744.8,366.7 745.3,390.7 745.9,369.4 746.4,381.4 747.0,368.7 747.5,373.9 748.1,393.8 748.6,375.2 749.2,377.1 749.7,371.5 750.3,387.9 750.8,378.2 751.4,382.5 751.9,389.7 752.5,393.7 753.0,380.0 753.6,380.7 754.1,385.5 754.7,383.9 755.2,401.1 755.8,395.5 756.3,395.2 756.9,395.6 757.4,418.8 758.0,396.8 758.5,402.8 759.1,402.5 759.6,402.1 760.2,410.2 760.7,413.3 761.3,415.0 761.8,440.0 762.4,415.5 762.9,433.0 763.5,422.2 764.0,425.0 764.6,440.0 765.1,427.0 765.7,428.8 766.2,424.1 766.8,427.0 767.3,425.0 767.9,434.1 768.4,441.4 769.0,434.2 769.5,435.0 770.1,434.3 770.6,427.1 771.2,435.1 771.7,422.3 772.3,425.6 772.8,458.0 773.4,428.6 773.9,439.8 774.5,425.1 775.0,426.0 775.6,420.1 776.1,420.5 776.7,419.6 777.2,456.0 777.8,423.9 778.3,431.9 778.9,422.6 779.4,422.2 780.0,418.6 780.5,428.9 781.1,420.4 781.6,426.9 782.2,449.9 782.7,443.2 783.3,430.4 783.8,428.2 784.4,449.7 784.9,466.0" fill="none" stroke="#EDE86A" stroke-width="1.2" stroke-linejoin="miter" stroke-miterlimit="2"/></svg>
<div class="t" style="left:486.00px;top:32.83px;font-size:10px;color:#3A3A3A;letter-spacing:-2.109px;font-style:italic;">RMS</div>
<div class="t" style="left:560.00px;top:32.83px;font-size:10px;color:#3A3A3A;letter-spacing:-0.599px;font-style:italic;">Peak</div>
<div class="t" style="left:634.00px;top:32.83px;font-size:10px;color:#3A3A3A;letter-spacing:-0.116px;font-style:italic;">Location</div>
<div class="t" style="left:454.00px;top:46.94px;font-size:10px;color:#3A3A3A;letter-spacing:-0.951px;">EVM:</div>
<div class="t" style="left:485.60px;top:46.94px;font-size:10px;color:#3A3A3A;letter-spacing:-0.117px;word-spacing:0.4px;">2.153 %</div>
<div class="t" style="left:560.00px;top:46.94px;font-size:10px;color:#3A3A3A;letter-spacing:-0.017px;word-spacing:0.4px;">5.640 %</div>
<div class="t" style="left:634.00px;top:46.94px;font-size:10px;color:#3A3A3A;letter-spacing:-0.277px;word-spacing:0.4px;">62.00 Sym</div>
<div class="t" style="left:485.60px;top:60.53px;font-size:10px;color:#3A3A3A;letter-spacing:-0.326px;word-spacing:0.4px;">-33.339 dB</div>
<div class="t" style="left:560.00px;top:60.53px;font-size:10px;color:#3A3A3A;letter-spacing:-0.260px;word-spacing:0.4px;">-24.974 dB</div>
<div class="t" style="left:425.00px;top:75.83px;font-size:10px;color:#3A3A3A;letter-spacing:-0.540px;word-spacing:0.4px;">Phase Error:</div>
<div class="t" style="left:486.00px;top:75.83px;font-size:10px;color:#3A3A3A;letter-spacing:-0.035px;word-spacing:0.4px;">1.068 °</div>
<div class="t" style="left:560.00px;top:75.83px;font-size:10px;color:#3A3A3A;letter-spacing:-0.035px;word-spacing:0.4px;">3.971 °</div>
<div class="t" style="left:634.00px;top:75.83px;font-size:10px;color:#3A3A3A;letter-spacing:-0.185px;word-spacing:0.4px;">11.00 Sym</div>
<div class="t" style="left:433.00px;top:89.53px;font-size:10px;color:#3A3A3A;letter-spacing:-0.559px;word-spacing:0.4px;">Mag Error:</div>
<div class="t" style="left:486.00px;top:89.53px;font-size:10px;color:#3A3A3A;letter-spacing:-0.184px;word-spacing:0.4px;">1.554 %</div>
<div class="t" style="left:560.00px;top:89.53px;font-size:10px;color:#3A3A3A;letter-spacing:-0.017px;word-spacing:0.4px;">4.829 %</div>
<div class="t" style="left:634.00px;top:89.53px;font-size:10px;color:#3A3A3A;letter-spacing:-0.308px;word-spacing:0.4px;">105.00 Sym</div>
<div class="t" style="left:429.60px;top:113.93px;font-size:10px;color:#3A3A3A;letter-spacing:-0.934px;">MER(RMS):</div>
<div class="t" style="left:484.00px;top:115.93px;font-size:10px;color:#3A3A3A;letter-spacing:-0.251px;word-spacing:0.4px;">33.339 dB</div>
<div class="t" style="left:405.60px;top:129.34px;font-size:10px;color:#3A3A3A;letter-spacing:-0.217px;word-spacing:0.4px;">IQ Origin Offset:</div>
<div class="t" style="left:485.00px;top:129.34px;font-size:10px;color:#3A3A3A;letter-spacing:-0.260px;word-spacing:0.4px;">-61.771 dB</div>
<div class="t" style="left:409.00px;top:144.74px;font-size:10px;color:#3A3A3A;letter-spacing:-0.588px;word-spacing:0.4px;">Gain Imbalance:</div>
<div class="t" style="left:485.00px;top:144.74px;font-size:10px;color:#3A3A3A;letter-spacing:-0.350px;word-spacing:0.4px;">0.002 dB</div>
<div class="t" style="left:606.00px;top:114.73px;font-size:10px;color:#3A3A3A;letter-spacing:-0.708px;">Rho:</div>
<div class="t" style="left:635.00px;top:114.73px;font-size:10px;color:#3A3A3A;letter-spacing:-0.103px;">0.999539</div>
<div class="t" style="left:555.00px;top:129.94px;font-size:10px;color:#3A3A3A;letter-spacing:-0.362px;word-spacing:0.4px;">Frequency Error:</div>
<div class="t" style="left:635.00px;top:129.94px;font-size:10px;color:#3A3A3A;letter-spacing:-0.429px;word-spacing:0.4px;">2.998 kHz</div>
<div class="t" style="left:551.00px;top:144.34px;font-size:10px;color:#3A3A3A;letter-spacing:-0.298px;word-spacing:0.4px;">Quadrature Error:</div>
<div class="t" style="left:635.00px;top:144.34px;font-size:10px;color:#3A3A3A;letter-spacing:-0.077px;word-spacing:0.4px;">-0.081 °</div>
<div class="t" style="left:489.50px;top:287.94px;font-size:10px;color:#3A3A3A;letter-spacing:-0.405px;word-spacing:0.4px;">Trace 1</div>
<div class="t" style="left:544.40px;top:287.94px;font-size:10px;color:#3A3A3A;letter-spacing:-0.139px;">Show</div>
<div class="t" style="left:576.00px;top:287.94px;font-size:10px;color:#3A3A3A;letter-spacing:-0.549px;word-spacing:0.4px;">+Peak Normal</div>
<div class="t" style="left:760.00px;top:289.01px;font-size:9.2px;color:#3A3A3A;letter-spacing:-0.617px;">Clear</div>
<div class="t" style="left:419.00px;top:306.94px;font-size:10px;color:#3A3A3A;letter-spacing:-0.316px;word-spacing:0.4px;">0.00 dBm</div>
<div class="t" style="left:415.60px;top:325.94px;font-size:10px;color:#3A3A3A;letter-spacing:-0.246px;">dB/div:</div>
<div class="t" style="left:415.00px;top:337.54px;font-size:10px;color:#3A3A3A;letter-spacing:-0.481px;word-spacing:0.4px;">10.0 dB</div>
<div class="t" style="left:415.60px;top:351.64px;font-size:10px;color:#3A3A3A;letter-spacing:-1.174px;">RBW:</div>
<div class="t" style="left:415.00px;top:363.94px;font-size:10px;color:#3A3A3A;letter-spacing:-1.073px;word-spacing:0.4px;font-style:italic;">1 MHz</div>
<div class="t" style="left:419.00px;top:376.94px;font-size:10px;color:#3A3A3A;letter-spacing:-0.625px;">VBW:</div>
<div class="t" style="left:413.40px;top:483.34px;font-size:10px;color:#3A3A3A;letter-spacing:-0.307px;word-spacing:0.4px;">-100.00 dBm</div>
<div class="t" style="left:412.00px;top:499.14px;font-size:10px;color:#3A3A3A;letter-spacing:-0.290px;">Autoscale</div>
<div class="t" style="left:488.00px;top:499.14px;font-size:10px;color:#3A3A3A;letter-spacing:-0.625px;word-spacing:0.4px;">CF: 1.000 GHz</div>
<div class="t" style="left:689.70px;top:498.74px;font-size:10px;color:#3A3A3A;letter-spacing:-0.511px;word-spacing:0.4px;">Span: 500 MHz</div>
<div class="t" style="left:15.70px;top:501.52px;font-size:8.6px;color:#3A3A3A;letter-spacing:-1.061px;">RMS:</div>
<div class="t" style="left:39.20px;top:501.52px;font-size:8.6px;color:#3A3A3A;letter-spacing:0.059px;word-spacing:0.4px;">2.153 %</div>
<div class="t" style="left:105.00px;top:501.52px;font-size:8.6px;color:#3A3A3A;letter-spacing:-0.613px;word-spacing:0.4px;">Peak EVM:</div>
<div class="t" style="left:151.00px;top:501.52px;font-size:8.6px;color:#3A3A3A;word-spacing:0.4px;">5.640 %</div>
<div class="t" style="left:207.50px;top:501.52px;font-size:8.6px;color:#3A3A3A;letter-spacing:-0.150px;word-spacing:0.4px;">@ 62.00 Sym</div>
<div class="t" style="left:5.00px;top:523.03px;font-size:10px;color:#3A3A3A;letter-spacing:-0.253px;">Stopped</div>
<div class="t" style="left:83.00px;top:523.03px;font-size:10px;color:#3A3A3A;letter-spacing:-0.200px;word-spacing:0.4px;">Acq BW: 500.00 MHz, Acq Length: 2.230 us</div>
<div class="t" style="left:304.00px;top:523.03px;font-size:10px;color:#3A3A3A;letter-spacing:-0.473px;word-spacing:0.4px;">Scope BW 2.500 GHz</div>
<div class="t" style="left:420.00px;top:523.03px;font-size:10px;color:#3A3A3A;letter-spacing:-0.376px;word-spacing:0.4px;">Scope sample rate 40.000 GHz</div>
</body></html>
